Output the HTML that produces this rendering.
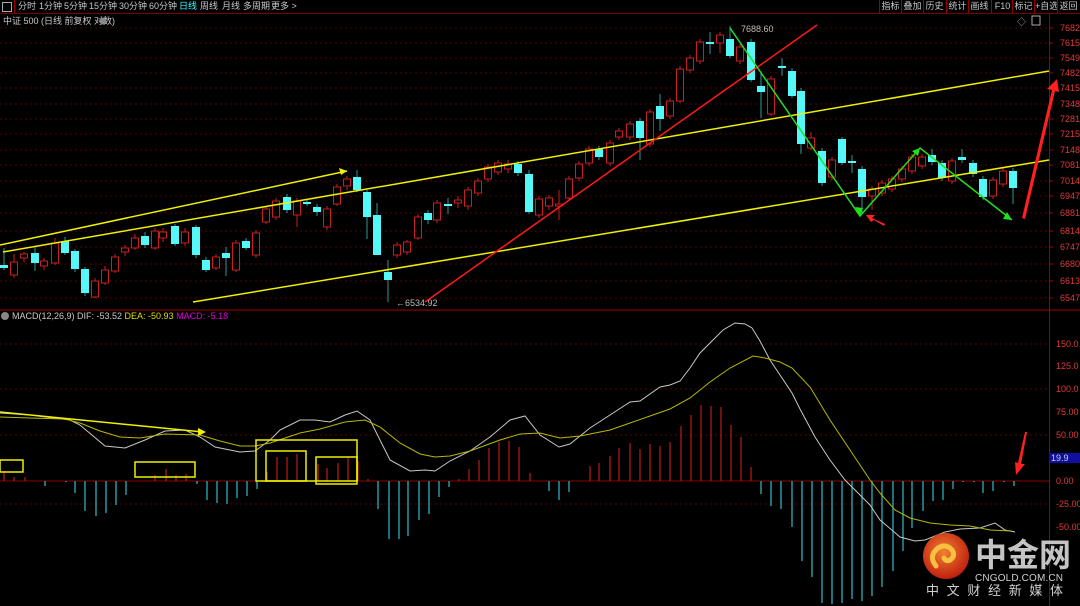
<!DOCTYPE html>
<html><head><meta charset="utf-8"><style>
html,body{margin:0;padding:0;background:#000;width:1080px;height:606px;overflow:hidden;font-family:"Liberation Sans","Noto Sans CJK SC",sans-serif}
#tb{position:absolute;left:0;top:0;width:1080px;height:13px;border-bottom:1px solid #7a0000;font-size:9px;color:#c8c8c8;line-height:13px;white-space:nowrap}
#tb span{position:absolute;top:0}
.rb{border-left:1px solid #900;height:13px;width:21px;text-align:center}
</style></head><body>
<div id="tb">
<span style="left:2px;top:2px;width:8px;height:8px;border:1px solid #aaa;"></span>
<span style="left:14px;top:0;height:13px;border-left:1px solid #900"></span>
<span style="left:18px">分时</span><span style="left:39px">1分钟</span><span style="left:64px">5分钟</span><span style="left:89px">15分钟</span><span style="left:119px">30分钟</span><span style="left:149px">60分钟</span><span style="left:179px;color:#3ff">日线</span><span style="left:200px">周线</span><span style="left:222px">月线</span><span style="left:243px">多周期</span><span style="left:271px">更多 &gt;</span>
<span class="rb" style="left:879px">指标</span><span class="rb" style="left:901px">叠加</span><span class="rb" style="left:923px">历史</span><span class="rb" style="left:946px">统计</span><span class="rb" style="left:968px">画线</span><span class="rb" style="left:991px">F10</span><span class="rb" style="left:1012px">标记</span><span class="rb" style="left:1034px">+自选</span><span class="rb" style="left:1057px">返回</span>
</div>
<svg id="s" width="1080" height="606" style="position:absolute;left:0;top:0" xmlns="http://www.w3.org/2000/svg" font-family="Liberation Sans, Noto Sans CJK SC, sans-serif">
<text x="3" y="24" font-size="9" fill="#c8c8c8">中证 500 (日线 前复权 对数)</text>
<circle cx="103" cy="21" r="3.5" fill="#888"/>
<text x="1017" y="25" font-size="9" fill="#aaa">◇</text>
<rect x="1032" y="16" width="8" height="9" fill="none" stroke="#aaa"/>
<line x1="0" y1="310" x2="1080" y2="310" stroke="#a00000"/>
<line x1="1049.5" y1="14" x2="1049.5" y2="606" stroke="#a00000"/>
<circle cx="5" cy="316" r="4" fill="#888"/>
<text x="12" y="319" font-size="9" fill="#c8c8c8">MACD(12,26,9)  DIF: -53.52 <tspan fill="#dd0">DEA: -50.93</tspan> <tspan fill="#d0d">MACD: -5.18</tspan></text>
<g id="g"></g>
</svg>
<script>
var g=document.getElementById('g'),h='';
function L(x1,y1,x2,y2,c,w,e){h+='<line x1="'+x1+'" y1="'+y1+'" x2="'+x2+'" y2="'+y2+'" stroke="'+c+'" stroke-width="'+(w||1)+'" '+(e||'')+'/>';}
var py=[[7682,28],[7615,43],[7549,58],[7482,73],[7415,88],[7348,104],[7281,119],[7215,134],[7148,150],[7081,165],[7014,181],[6947,196],[6881,213],[6814,231],[6747,247],[6680,264],[6613,281],[6547,298]];
py.forEach(function(p){L(0,p[1],1049,p[1],'#5a0000',1,'stroke-dasharray="2,3"');L(1049,p[1],1053,p[1],'#a00',1);h+='<text x="1060" y="'+(p[1]+3)+'" font-size="9" fill="#e03a3a">'+p[0]+'</text>';});
[[344,'150.0'],[366,'125.0'],[389,'100.0'],[412,'75.00'],[435,'50.00'],[481,'0.00'],[504,'-25.00'],[527,'-50.00']].forEach(function(p,i){if(i%2==0&&p[0]!=481)L(0,p[0],1049,p[0],'#5a0000',1,'stroke-dasharray="2,3"');h+='<text x="1056" y="'+(p[0]+3)+'" font-size="9" fill="#e03a3a">'+p[1]+'</text>';});
L(0,481,1049,481,'#8a0000',1);
var C=[[4,265,268,0,248,270],[14,262,275,1,254,278],[24,254,258,1,252,262],[35,253,263,0,247,271],[44,261,266,1,258,270],[55,243,263,1,238,265],[65,241,253,0,237,255],[75,251,269,0,249,272],[85,269,293,0,267,296],[95,281,297,1,278,298],[105,270,283,1,266,285],[115,257,271,1,254,273],[125,248,252,1,245,256],[135,238,248,1,234,250],[145,236,245,0,232,248],[155,231,248,1,228,250],[163,232,238,1,228,242],[175,226,244,0,224,246],[185,232,243,1,228,246],[196,227,255,0,225,258],[206,260,270,0,257,272],[216,257,268,1,254,270],[226,253,258,0,247,276],[236,243,270,1,240,272],[246,241,248,0,238,250],[256,233,255,1,230,258],[266,209,222,1,206,224],[276,201,217,1,198,220],[287,197,210,0,194,213],[297,201,215,1,198,227],[307,202,204,0,199,206],[317,207,212,0,204,216],[327,209,227,1,206,230],[337,187,204,1,184,206],[347,179,186,1,176,190],[357,177,190,0,170,192],[367,192,217,0,190,239],[377,215,255,0,203,255],[388,272,280,0,260,302],[397,245,255,1,242,258],[407,242,252,1,240,255],[418,217,238,1,214,240],[428,213,220,0,210,224],[437,203,220,1,200,223],[448,204,206,0,198,214],[458,200,203,1,196,208],[468,190,206,1,187,210],[478,181,193,1,178,196],[488,167,179,1,164,182],[498,163,172,1,160,175],[508,164,169,1,160,173],[518,164,173,0,161,176],[529,174,212,0,170,214],[539,199,215,1,196,218],[549,198,206,1,195,210],[559,204,206,1,190,220],[569,179,198,1,176,200],[579,164,178,1,161,181],[589,149,163,1,146,166],[599,149,157,0,146,160],[610,143,163,1,140,166],[619,131,137,1,128,140],[630,124,137,1,121,140],[640,121,138,0,118,160],[650,112,144,1,109,147],[660,106,119,0,94,131],[670,101,116,1,98,119],[680,69,101,1,66,103],[690,58,70,1,55,73],[700,42,61,1,39,64],[710,42,44,0,32,54],[720,35,43,1,32,53],[730,39,56,0,26,58],[740,47,61,1,44,64],[751,42,80,0,39,82],[761,86,92,0,73,118],[771,79,114,1,76,116],[782,66,68,0,58,76],[792,71,96,0,68,98],[801,91,144,0,88,154],[811,138,148,1,132,150],[822,151,183,0,148,186],[832,160,177,1,157,180],[842,139,163,0,137,165],[852,161,163,0,155,173],[862,169,197,0,166,213],[872,189,196,1,186,210],[882,183,193,1,180,196],[892,179,189,1,176,192],[902,169,179,1,166,182],[912,157,171,1,154,174],[922,157,166,1,154,169],[932,155,162,0,149,165],[942,163,178,0,160,181],[952,161,181,1,158,184],[962,157,160,0,149,163],[973,163,174,0,160,177],[983,179,197,0,176,200],[993,180,196,1,177,199],[1003,171,184,1,168,187],[1013,171,188,0,168,204]];
C.forEach(function(c){var wc=c[3]?'#c82020':'#2a9a9a';L(c[0],c[4],c[0],c[1],wc);L(c[0],c[2],c[0],c[5],wc);
if(c[3])h+='<rect x="'+(c[0]-3.5)+'" y="'+c[1]+'" width="7" height="'+Math.max(c[2]-c[1],1)+'" fill="none" stroke="#c82020"/>';else h+='<rect x="'+(c[0]-4)+'" y="'+c[1]+'" width="8" height="'+Math.max(c[2]-c[1],2)+'" fill="#54f8f8"/>';});
h+='<text x="741" y="32" font-size="9" fill="#bbb">7688.60</text><text x="396" y="306" font-size="9" fill="#bbb">←6534.92</text>';
L(0,245,347,171,'#f0f000',1.5);h+='<polygon points="347,171 339,168 341,175" fill="#f0f000"/>';
L(3,252,1049,71,'#f0f000',1.5);L(193,302,1049,160,'#f0f000',1.5);
L(425,302,817,25,'#ff1a1a',1.5);
h+='<polyline points="730,28 860,216 920,148 1012,220" fill="none" stroke="#20e020" stroke-width="1.5"/>';
h+='<polygon points="860,216 855,207 863,208" fill="#20e020"/><polygon points="920,148 912,151 918,156" fill="#20e020"/><polygon points="1012,220 1003,219 1007,212" fill="#20e020"/>';
h+='<polygon points="1022,218 1052,90 1047,89 1057,79 1059,92 1055,91 1025,219" fill="#ff2020"/>';
h+='<polygon points="885,224 872,218 875,215 866,215 871,222 874,220 884,226" fill="#ff2020"/>';
var B=[[4,10],[14,4],[25,4],[45,-5],[66,-1],[75,-12],[85,-30],[96,-35],[106,-32],[116,-24],[126,-14],[155,6],[166,12],[176,6],[186,7],[197,-3],[207,-19],[217,-22],[227,-23],[237,-17],[247,-15],[257,-8],[267,9],[277,24],[287,24],[297,27],[318,17],[327,13],[338,18],[348,23],[358,20],[368,2],[378,-28],[389,-58],[399,-58],[408,-55],[419,-39],[429,-33],[439,-16],[449,-6],[459,2],[469,12],[479,21],[489,33],[499,39],[509,40],[519,34],[530,8],[549,-10],[559,-19],[569,-11],[590,15],[599,18],[610,25],[619,33],[630,38],[640,32],[650,37],[660,35],[670,39],[681,55],[691,66],[701,76],[711,75],[721,74],[731,56],[741,44],[751,14],[761,-13],[771,-25],[781,-28],[792,-46],[802,-80],[812,-96],[822,-122],[832,-123],[842,-122],[852,-118],[862,-120],[872,-115],[882,-106],[893,-90],[903,-70],[912,-47],[923,-30],[933,-20],[943,-19],[953,-8],[963,-1],[974,-1],[983,-12],[993,-10],[1004,-1],[1014,-5]];
B.forEach(function(b){L(b[0],481,b[0],481-b[1],b[1]>0?'#b01818':'#2ab0b8',1.3);});
h+='<polyline fill="none" stroke="#c8c8c8" stroke-width="1" points="0,413 30,415 70,420 80,425 105,446 125,448 145,440 165,431 185,430 200,437 215,447 240,452 255,451 270,440 280,430 300,420 315,420 330,422 345,415 357,411 370,420 390,460 410,471 425,470 435,471 450,461 470,451 490,437 510,420 525,416 540,435 559,447 570,444 590,428 610,415 630,402 640,401 660,387 670,385 680,381 690,368 700,353 713,340 723,330 735,323 745,324 752,328 760,341 770,360 780,375 792,393 800,409 815,437 830,460 845,480 860,495 870,505 880,520 900,537 915,541 925,540 945,532 960,529 980,528 995,523 1005,530 1015,532"/>';
h+='<polyline fill="none" stroke="#b8b800" stroke-width="1" points="0,417 30,418 65,419 80,423 100,431 120,437 140,438 165,434 200,435 220,441 240,446 255,446 270,443 300,433 320,429 345,422 365,420 380,427 400,443 420,454 435,457 450,456 470,451 500,440 520,434 540,433 560,438 580,436 610,430 630,423 650,416 670,409 690,398 710,382 730,368 753,356 765,358 780,362 792,368 810,387 830,420 850,450 870,480 880,493 895,510 910,518 930,523 950,525 970,526 990,530 1012,531"/>';
L(0,412,203,432,'#f0f000',1.5);h+='<polygon points="206,432 198,428 198,436" fill="#f0f000"/>';
[[0,460,23,12],[135,462,60,15],[256,440,101,41],[266,451,40,30],[316,457,41,27]].forEach(function(r){h+='<rect x="'+r[0]+'" y="'+r[1]+'" width="'+r[2]+'" height="'+r[3]+'" fill="none" stroke="#f0f000" stroke-width="1.5"/>';});
h+='<polygon points="1027,432 1021,464 1025,464 1016,475 1015,462 1018,463 1025,432" fill="#ff2020"/>';
h+='<rect x="1049" y="453" width="31" height="10" fill="#1010a0"/><text x="1051" y="461" font-size="9" fill="#ccc">19.9</text>';
h+='<defs><radialGradient id="lg" cx="45%" cy="40%" r="60%"><stop offset="0" stop-color="#f08030"/><stop offset="1" stop-color="#c02010"/></radialGradient></defs>';
h+='<circle cx="946" cy="556" r="23" fill="url(#lg)"/><path d="M936,566 q-8,-10 2,-18 q8,-5 14,2 q4,6 -2,10 q-4,2 -6,-2" fill="none" stroke="#f8c040" stroke-width="5" stroke-linecap="round"/>';
h+='<text x="975" y="566" font-size="32" font-weight="bold" fill="#c4c4c4" font-family="Noto Sans CJK SC, sans-serif">中金网</text>';
h+='<text x="975" y="581" font-size="10" fill="#d0d0d0" textLength="88">CNGOLD.COM.CN</text>';
h+='<text x="926" y="595" font-size="13" fill="#d0d0d0" textLength="137" font-family="Noto Sans CJK SC, sans-serif">中文财经新媒体</text>';
g.innerHTML=h;
</script>
</body></html>
